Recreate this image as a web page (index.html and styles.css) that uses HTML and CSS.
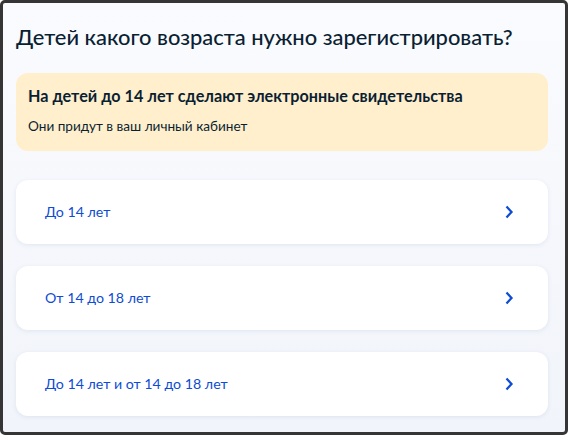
FILE: index.html
```html
<!DOCTYPE html>
<html lang="ru">
<head>
    <meta charset="UTF-8">
    <meta name="viewport" content="width=device-width, initial-scale=1.0">
    <title>Регистрация рождения</title>
    <link rel="stylesheet" href="styles.css">
</head>
<body>
    <div class="screen">
        <h1 class="screen-title">Детей какого возраста нужно зарегистрировать?</h1>

        <div class="notice">
            <h2 class="notice-title">На детей до 14 лет сделают электронные свидетельства</h2>
            <p class="notice-text">Они придут в ваш личный кабинет</p>
        </div>

        <div class="options">
            <a class="option" href="#">
                <span class="option-label">До 14 лет</span>
                <svg class="option-arrow" width="10" height="14" viewBox="0 0 10 14">
                    <path d="M2.5 1.5 L7.5 7 L2.5 12.5" fill="none" stroke="currentColor" stroke-width="2.3"/>
                </svg>
            </a>
            <a class="option" href="#">
                <span class="option-label">От 14 до 18 лет</span>
                <svg class="option-arrow" width="10" height="14" viewBox="0 0 10 14">
                    <path d="M2.5 1.5 L7.5 7 L2.5 12.5" fill="none" stroke="currentColor" stroke-width="2.3"/>
                </svg>
            </a>
            <a class="option" href="#">
                <span class="option-label">До 14 лет и от 14 до 18 лет</span>
                <svg class="option-arrow" width="10" height="14" viewBox="0 0 10 14">
                    <path d="M2.5 1.5 L7.5 7 L2.5 12.5" fill="none" stroke="currentColor" stroke-width="2.3"/>
                </svg>
            </a>
        </div>
    </div>
</body>
</html>
```

FILE: styles.css
```css
* {
    margin: 0;
    padding: 0;
    box-sizing: border-box;
}

body {
    font-family: Lato, "Noto Sans", sans-serif;
    background: #ffffff;
    color: #0b1f33;
}

.screen {
    width: 568px;
    height: 435px;
    border: 3px solid #353535;
    border-radius: 5px;
    background: linear-gradient(180deg, #fafbfe 0%, #f1f4fa 100%);
    padding: 20px 17px 0 13px;
    overflow: hidden;
}

.screen-title {
    font-size: 21.9px;
    line-height: 28px;
    font-weight: 500;
    color: #0b1f33;
    margin-bottom: 22px;
}

.notice {
    background: #ffefcc;
    border-radius: 12px;
    padding: 13px 12px 16px;
}

.notice-title {
    font-size: 16.2px;
    line-height: 20px;
    font-weight: 700;
    color: #0b1f33;
    margin-bottom: 11px;
}

.notice-text {
    font-size: 13.6px;
    line-height: 18px;
    color: #0b1f33;
}

.options {
    display: flex;
    flex-direction: column;
    gap: 22px;
    margin-top: 29px;
}

.option {
    display: flex;
    align-items: center;
    justify-content: space-between;
    height: 64px;
    padding: 0 34px 0 29px;
    background: #ffffff;
    border-radius: 12px;
    box-shadow: 0 1px 4px rgba(86, 111, 160, 0.12);
    text-decoration: none;
    color: #0d4cd3;
}

.option-label {
    font-size: 14.2px;
    line-height: 18px;
}

.option-arrow {
    display: block;
}
```
